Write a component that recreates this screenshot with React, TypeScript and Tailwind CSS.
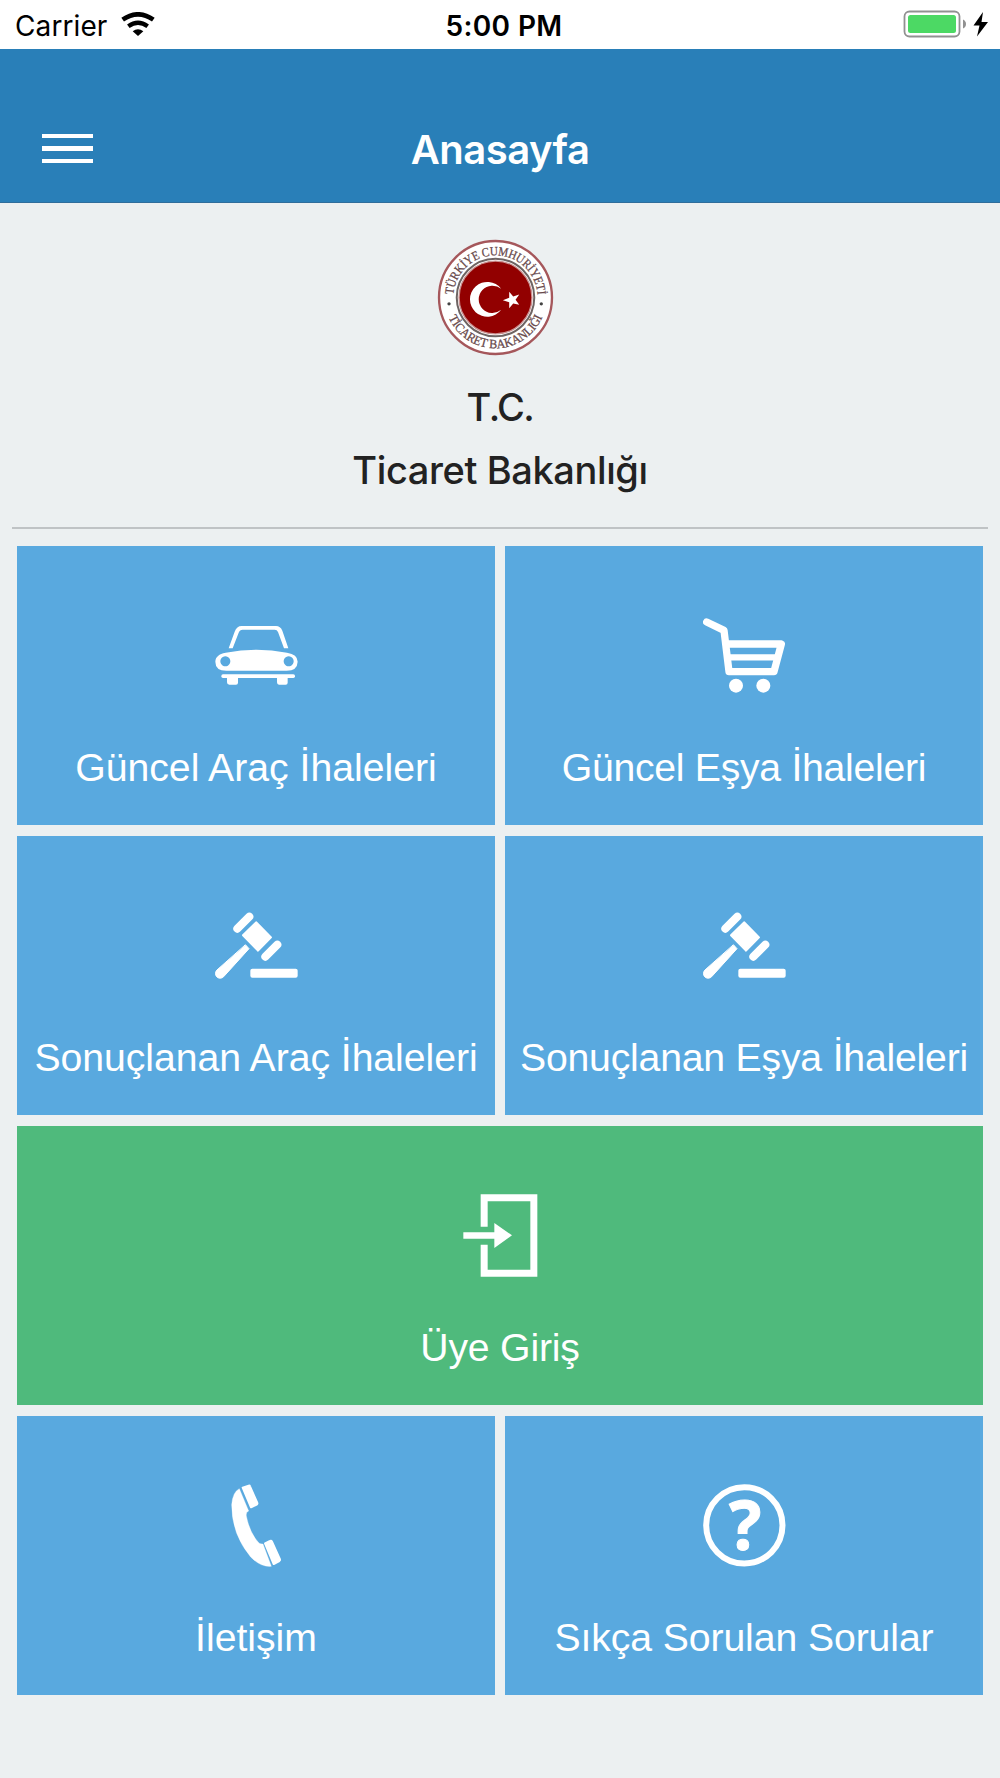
import type { ReactNode } from 'react';

interface TileProps {
  label: string;
  icon: ReactNode;
  className?: string;
  labelClassName?: string;
}

const CarIcon = () => (
  <svg viewBox="0 0 249 249" className="h-[83px] w-[83px]" fill="#fff">
    <path d="M41 103 L59 53 Q65 36 80 36 H183 Q196 36 202 50 L220 103 H207 L189 54 Q186 47 179 47 H83 Q74 47 71 56 L53 103Z" />
    <path
      fillRule="evenodd"
      d="M10 125 Q16 119 32 116 Q125 99 216 116 Q248 121 248 143 Q247 170 215 170 H34 Q1 170 1 143 Q1 131 10 125Z M31 127 a15 15 0 1 0 .01 0Z M221 127 a15 15 0 1 0 .01 0Z"
    />
    <rect x="19" y="181" width="221" height="11" rx="5" />
    <path d="M36 190 H69 V206 Q69 212 63 212 H43 Q36 212 36 205Z M186 190 H218 V206 Q218 212 212 212 H192 Q186 212 186 205Z" />
  </svg>
);

const CartIcon = () => (
  <svg viewBox="0 0 249 249" className="h-[83px] w-[83px]" fill="none" stroke="#fff" strokeLinecap="round" strokeLinejoin="round">
    <path strokeWidth="22" d="M11 24 L63 49 L78 173 H213 L235 90 H70" />
    <path strokeWidth="19" d="M78 130 H218" />
    <circle cx="99" cy="215" r="21" fill="#fff" stroke="none" />
    <circle cx="181" cy="215" r="21" fill="#fff" stroke="none" />
  </svg>
);

const GavelIcon = () => (
  <svg viewBox="0 0 249 249" className="h-[83px] w-[83px]" fill="#fff" stroke="#fff" strokeLinecap="round" strokeLinejoin="round">
    <path strokeWidth="24" d="M103 38 L67 74 M187 122 L151 158" />
    <path strokeWidth="6" d="M124 55 L168 100 L129 140 L84 94Z" />
    <path strokeWidth="3" d="M92 123 L102 134 L26 218 A14 14 0 0 1 5 199Z" />
    <rect x="106" y="194" width="142" height="27" rx="6" stroke="none" />
  </svg>
);

const LoginIcon = () => (
  <svg viewBox="0 0 249 249" className="h-[83px] w-[83px]" fill="#fff">
    <path d="M65 98 V1 H235 V248 H65 V152 H86 V227 H214 V22 H86 V98Z" />
    <path d="M13 115 H106 V87 L159 124 L106 162 V134 H13Z" />
  </svg>
);

const PhoneIcon = () => (
  <svg viewBox="0 0 249 249" className="h-[83px] w-[83px]" fill="#fff" stroke="#fff" strokeLinejoin="round">
    <path strokeWidth="6" d="M83 11 L101 5 Q104 4 105 7 L127 57 Q128 60 125 62 L108 70Z" />
    <path d="M73 14 L101 81 Q92 83 94 96 Q104 146 130 175 Q133 181 144 180 L169 247 Q137 250 107 219 Q50 151 50 62 Q53 24 73 14Z" />
    <path strokeWidth="6" d="M150 178 L165 171 Q169 169 171 173 L195 226 Q196 229 193 231 L176 240Z" />
  </svg>
);

const HelpIcon = () => (
  <svg viewBox="0 0 249 249" className="h-[83px] w-[83px] overflow-visible">
    <circle cx="124" cy="124" r="114.5" fill="none" stroke="#fff" strokeWidth="18" />
    <text x="127" y="199" textAnchor="middle" fontFamily="'Open Sans', sans-serif" fontWeight="700" fontSize="204" fill="#fff" stroke="#fff" strokeWidth="3">
      ?
    </text>
  </svg>
);

const Emblem = () => (
  <svg viewBox="-175 -175 350 350" className="h-[117px] w-[117px]">
    <defs>
      <path id="arc-top" d="M-126 0 A126 126 0 0 1 126 0" />
      <path id="arc-bottom" d="M-152 0 A152 152 0 0 0 152 0" />
    </defs>
    <circle r="169" fill="#fff" stroke="#a5575b" strokeWidth="7" />
    <circle r="116" fill="#fff" stroke="#6e6463" strokeWidth="6" />
    <circle r="109" fill="#920000" stroke="#c98f8f" strokeWidth="4" />
    <path fill="#fff" d="M17 -26 A52 52 0 1 0 17 37 A41 41 0 1 1 17 -26Z" />
    <polygon fill="#fff" points="22,8 41,1 41,-17 53,-3 71,-9 60,7 71,22 53,18 41,32 41,14" />
    <circle cx="-139" cy="19" r="5" fill="#444" />
    <circle cx="137" cy="19" r="5" fill="#444" />
    <g fill="#67484a" stroke="#67484a" strokeWidth="0.8" fontFamily="'Liberation Serif', serif" fontSize="38">
      <text>
        <textPath href="#arc-top" startOffset="8" textLength="380" lengthAdjust="spacingAndGlyphs">
          TÜRKİYE CUMHURİYETİ
        </textPath>
      </text>
      <text>
        <textPath href="#arc-bottom" startOffset="61" textLength="356" lengthAdjust="spacingAndGlyphs">
          TİCARET BAKANLIĞI
        </textPath>
      </text>
    </g>
  </svg>
);

const StatusBar = () => (
  <div className="grid h-[49px] grid-cols-3 items-center bg-white pt-[3px] pr-[11px] pl-[15px] text-[28px] leading-[46px] text-black">
    <div className="flex items-center gap-[14px]">
      <span className="tracking-[0.1px]">Carrier</span>
      <svg viewBox="0 0 102 72" className="-mt-[4px] h-6 w-[34px]">
        <path fill="none" stroke="#000" strokeWidth="14" d="M5 23 Q51 -9 97 23" />
        <path fill="none" stroke="#000" strokeWidth="13" d="M22 43 Q51 22 80 43" />
        <path d="M35 58 Q51 45 67 58 L51 72Z" />
      </svg>
    </div>
    <span className="pl-[4px] text-center font-semibold tracking-[0.4px]">5:00 PM</span>
    <div className="flex items-center justify-end">
      <svg viewBox="0 0 86 28" className="-mt-[4px] h-7 w-[86px]">
        <rect x="1.5" y="1.5" width="55" height="25" rx="5" fill="#fff" stroke="#919191" strokeWidth="1.8" />
        <rect x="5" y="5" width="48" height="18" rx="2.5" fill="#4cd964" />
        <path fill="#919191" d="M60 9.5 Q63 11 63 14 Q63 17 60 18.5Z" />
        <path d="M80 2 L70.500 15.500 H76.500 L74 26.500 L85 12 H78.500Z" />
      </svg>
    </div>
  </div>
);

const Header = () => (
  <header className="grid h-[154px] grid-cols-3 items-center border-b border-[#2f6d9b] bg-[#297fb8] pt-[46px] pr-[42px] pl-[42px]">
    <div className="flex w-[51px] flex-col gap-2">
      <span className="h-[4.5px] bg-white" />
      <span className="h-[4.5px] bg-white" />
      <span className="h-[4.5px] bg-white" />
    </div>
    <h1 className="pt-[3px] text-center text-[40px] leading-[48px] font-semibold tracking-[-0.5px] text-white">Anasayfa</h1>
  </header>
);

const Tile = ({ label, icon, className = 'bg-[#59a9df]', labelClassName = '' }: TileProps) => (
  <div className={`flex h-[279px] flex-col items-center pt-[68px] ${className}`}>
    {icon}
    <span className={`mt-[47px] font-['Liberation_Sans',Arial,sans-serif] text-[39.2px] leading-[48px] whitespace-nowrap text-white ${labelClassName}`}>
      {label}
    </span>
  </div>
);

export default function App() {
  return (
    <div className="h-[1778px] w-[1000px] overflow-hidden bg-[#ecf0f1] font-['Inter',sans-serif]">
      <StatusBar />
      <Header />

      <section className="mx-3 flex h-[326px] flex-col items-center border-b-2 border-[#bfc3c5] pt-9 text-[38px] leading-[63px] font-medium tracking-[-0.4px] text-[#222]">
        <div className="mr-[9px]">
          <Emblem />
        </div>
        <p className="mt-[20px] tracking-[-1.5px]">T.C.</p>
        <p>Ticaret Bakanlığı</p>
      </section>

      <main className="mx-[17px] mt-[17px] grid grid-cols-2 gap-x-[10px] gap-y-[11px]">
        <Tile label="Güncel Araç İhaleleri" icon={<CarIcon />} />
        <Tile label="Güncel Eşya İhaleleri" icon={<CartIcon />} labelClassName="tracking-[-0.28px]" />
        <Tile label="Sonuçlanan Araç İhaleleri" icon={<GavelIcon />} labelClassName="tracking-[-0.05px]" />
        <Tile label="Sonuçlanan Eşya İhaleleri" icon={<GavelIcon />} labelClassName="tracking-[-0.2px]" />
        <Tile label="Üye Giriş" icon={<LoginIcon />} className="col-span-2 bg-[#4fba7c]" labelClassName="tracking-[-0.2px]" />
        <Tile label="İletişim" icon={<PhoneIcon />} />
        <Tile label="Sıkça Sorulan Sorular" icon={<HelpIcon />} labelClassName="tracking-[-0.1px]" />
      </main>
    </div>
  );
}
